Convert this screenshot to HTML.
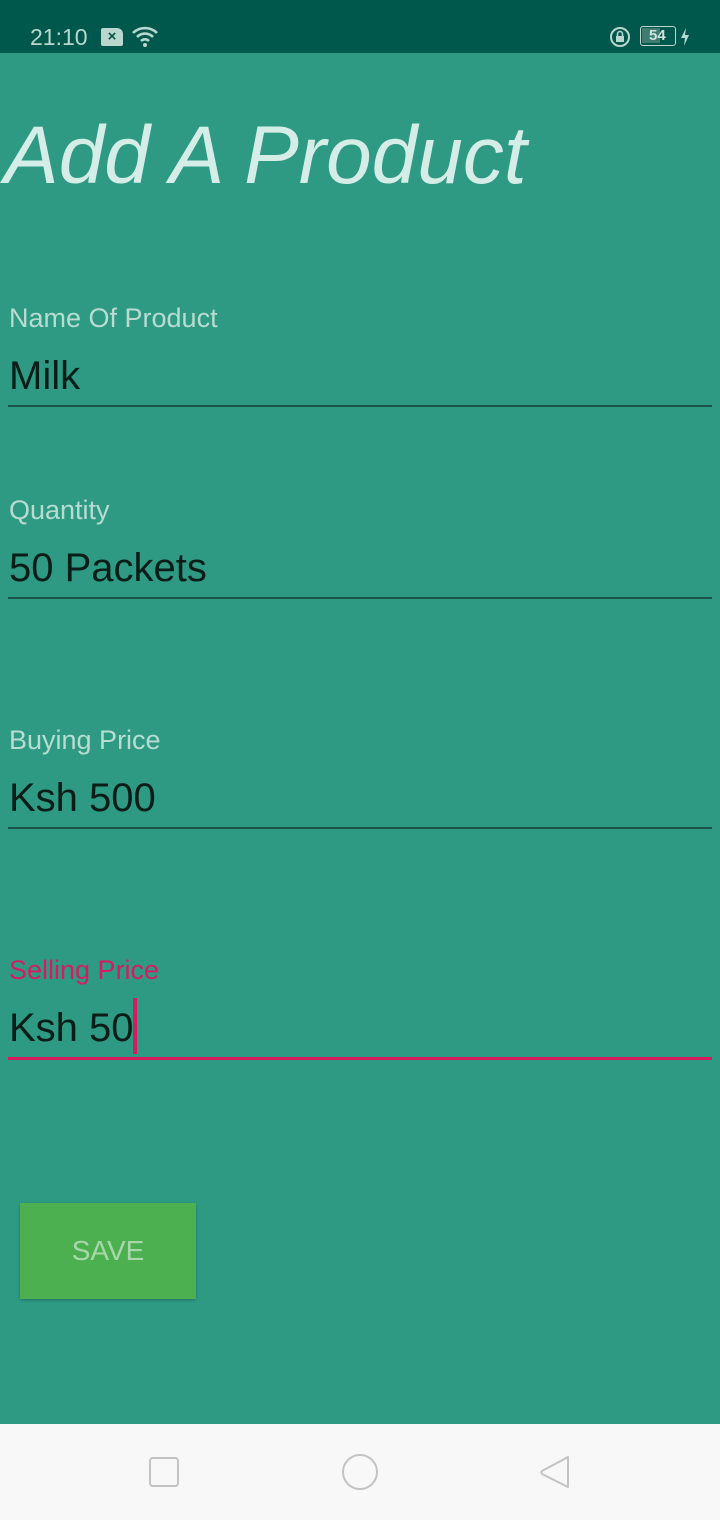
<!DOCTYPE html>
<html style="width:720px;height:1520px;overflow:hidden;background:#f8f8f8"><head><meta charset="utf-8"><style>
*{margin:0;padding:0;box-sizing:border-box}
body{width:720px;height:1520px;background:#2e9a84;font-family:"Liberation Sans",sans-serif;position:relative;overflow:hidden}
.sb{position:absolute;left:0;top:0;width:720px;height:53px;background:#00574b;color:#b9d6cf}
.t{position:absolute;white-space:nowrap;line-height:1}
.lab{font-size:27px;color:#b8dcd2}
.val{font-size:40px;color:#0b1d18}
.line{position:absolute;left:8px;width:704px;height:2px;background:#1d5248}
</style></head><body>
<div class="sb">
<div class="t" style="left:30px;top:26px;font-size:23px;color:#b9d6cf">21:10</div>
<div style="position:absolute;left:101px;top:28px;width:22px;height:18px;background:#b9d6cf;border-radius:2px 6px 2px 2px;color:#00574b;font-size:15px;font-weight:bold;text-align:center;line-height:18px">×</div>
<svg style="position:absolute;left:131px;top:25px" width="28" height="22" viewBox="0 0 28 22"><path d="M2 8a17 17 0 0 1 24 0M6 12a11 11 0 0 1 16 0M10 16a5.5 5.5 0 0 1 8 0" stroke="#b9d6cf" stroke-width="2.6" fill="none"/><circle cx="14" cy="20" r="2" fill="#b9d6cf"/></svg>
<svg style="position:absolute;left:609px;top:26px" width="24" height="22" viewBox="0 0 24 22"><circle cx="11" cy="11" r="9" stroke="#b9d6cf" stroke-width="2" fill="none"/><rect x="7" y="10" width="8" height="6" fill="#b9d6cf"/><path d="M8.5 10V8a2.5 2.5 0 0 1 5 0v2" stroke="#b9d6cf" stroke-width="1.6" fill="none"/></svg>
<div style="position:absolute;left:640px;top:26px;width:36px;height:20px;border:1.5px solid #b9d6cf;border-radius:3px"><div style="position:absolute;left:1px;top:1px;width:18px;height:15px;background:#3d7c70"></div><div class="t" style="left:8px;top:1px;font-size:15px;font-weight:bold;color:#cfe3de">54</div></div>
<svg style="position:absolute;left:679px;top:27px" width="12" height="20" viewBox="0 0 12 20"><path d="M7 1L2 11h4l-1 8 5-11H6z" fill="#b9d6cf"/></svg>
</div>
<div class="t" style="left:4px;top:115px;font-size:82px;font-style:italic;color:#d5ede7">Add A Product</div>
<div class="t lab" style="left:9px;top:305px">Name Of Product</div>
<div class="t val" style="left:9px;top:356px">Milk</div>
<div class="line" style="top:405px"></div>
<div class="t lab" style="left:9px;top:497px">Quantity</div>
<div class="t val" style="left:9px;top:548px">50 Packets</div>
<div class="line" style="top:597px"></div>
<div class="t lab" style="left:9px;top:727px">Buying Price</div>
<div class="t val" style="left:9px;top:778px">Ksh 500</div>
<div class="line" style="top:827px"></div>
<div class="t lab" style="left:9px;top:957px;color:#d81b60">Selling Price</div>
<div class="t val" style="left:9px;top:1008px">Ksh 50</div>
<div style="position:absolute;left:133px;top:998px;width:4px;height:56px;background:#d81b60"></div>
<div class="line" style="top:1057px;height:3px;background:#d81b60"></div>
<div style="position:absolute;left:20px;top:1203px;width:176px;height:96px;background:#4caf50;box-shadow:0 1px 3px rgba(0,0,0,.25);color:#a8d8a9;font-size:28px;text-align:center;line-height:96px">SAVE</div>
<div style="position:absolute;left:0;top:1424px;width:720px;height:96px;background:#f8f8f8">
<svg width="720" height="96"><rect x="150" y="34" width="28" height="28" rx="3" fill="none" stroke="#c2c2c2" stroke-width="2"/><circle cx="360" cy="48" r="17" fill="none" stroke="#c2c2c2" stroke-width="2"/><path d="M568 33v30l-26-13a2 2 0 0 1 0-3z" fill="none" stroke="#c2c2c2" stroke-width="2" stroke-linejoin="round"/></svg>
</div>
</body></html>
